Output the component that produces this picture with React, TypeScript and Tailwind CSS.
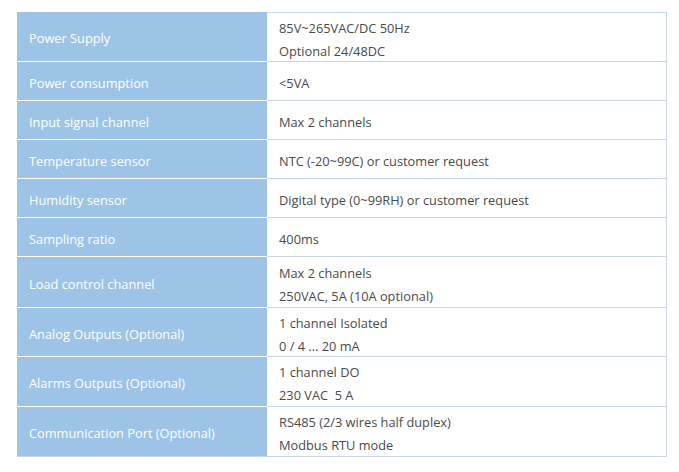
import React from 'react';

const rows: { label: string; values: string[]; h: string }[] = [
  { label: 'Power Supply', values: ['85V~265VAC/DC 50Hz', 'Optional 24/48DC'], h: 'h-[49px]' },
  { label: 'Power consumption', values: ['<5VA'], h: 'h-[39px]' },
  { label: 'Input signal channel', values: ['Max 2 channels'], h: 'h-[39px]' },
  { label: 'Temperature sensor', values: ['NTC (-20~99C) or customer request'], h: 'h-[39px]' },
  { label: 'Humidity sensor', values: ['Digital type (0~99RH) or customer request'], h: 'h-[39px]' },
  { label: 'Sampling ratio', values: ['400ms'], h: 'h-[39px]' },
  { label: 'Load control channel', values: ['Max 2 channels', '250VAC, 5A (10A optional)'], h: 'h-[51px]' },
  { label: 'Analog Outputs (Optional)', values: ['1 channel Isolated', '0 / 4 ... 20 mA'], h: 'h-[49px]' },
  { label: 'Alarms Outputs (Optional)', values: ['1 channel DO', '230 VAC  5 A'], h: 'h-[50px]' },
  { label: 'Communication Port (Optional)', values: ['RS485 (2/3 wires half duplex)', 'Modbus RTU mode'], h: 'h-[50px]' },
];

const App = () => {
  return (
    <div className="w-[679px] h-[472px] bg-white pt-3 pl-[17px] font-['Open_Sans',sans-serif] text-[12.8px]">
      <div className="w-[650px] flex flex-col border-b border-[#c9d5e2]">
        {rows.map((row, i) => (
          <div key={i} className={`flex ${row.h}`}>
            <div
              className={`w-[250px] shrink-0 bg-[#9dc3e6] text-white flex items-center pl-3 pt-[5px] ${
                i > 0 ? 'border-t border-white' : ''
              }`}
            >
              {row.label}
            </div>
            <div className="flex-1 border-t border-r border-[#c9d5e2] text-[#4a4a4a] flex flex-col justify-center pl-3 pt-[5px] leading-[23px] whitespace-pre">
              {row.values.map((v, j) => (
                <div key={j}>{v}</div>
              ))}
            </div>
          </div>
        ))}
      </div>
    </div>
  );
};

export default App;
